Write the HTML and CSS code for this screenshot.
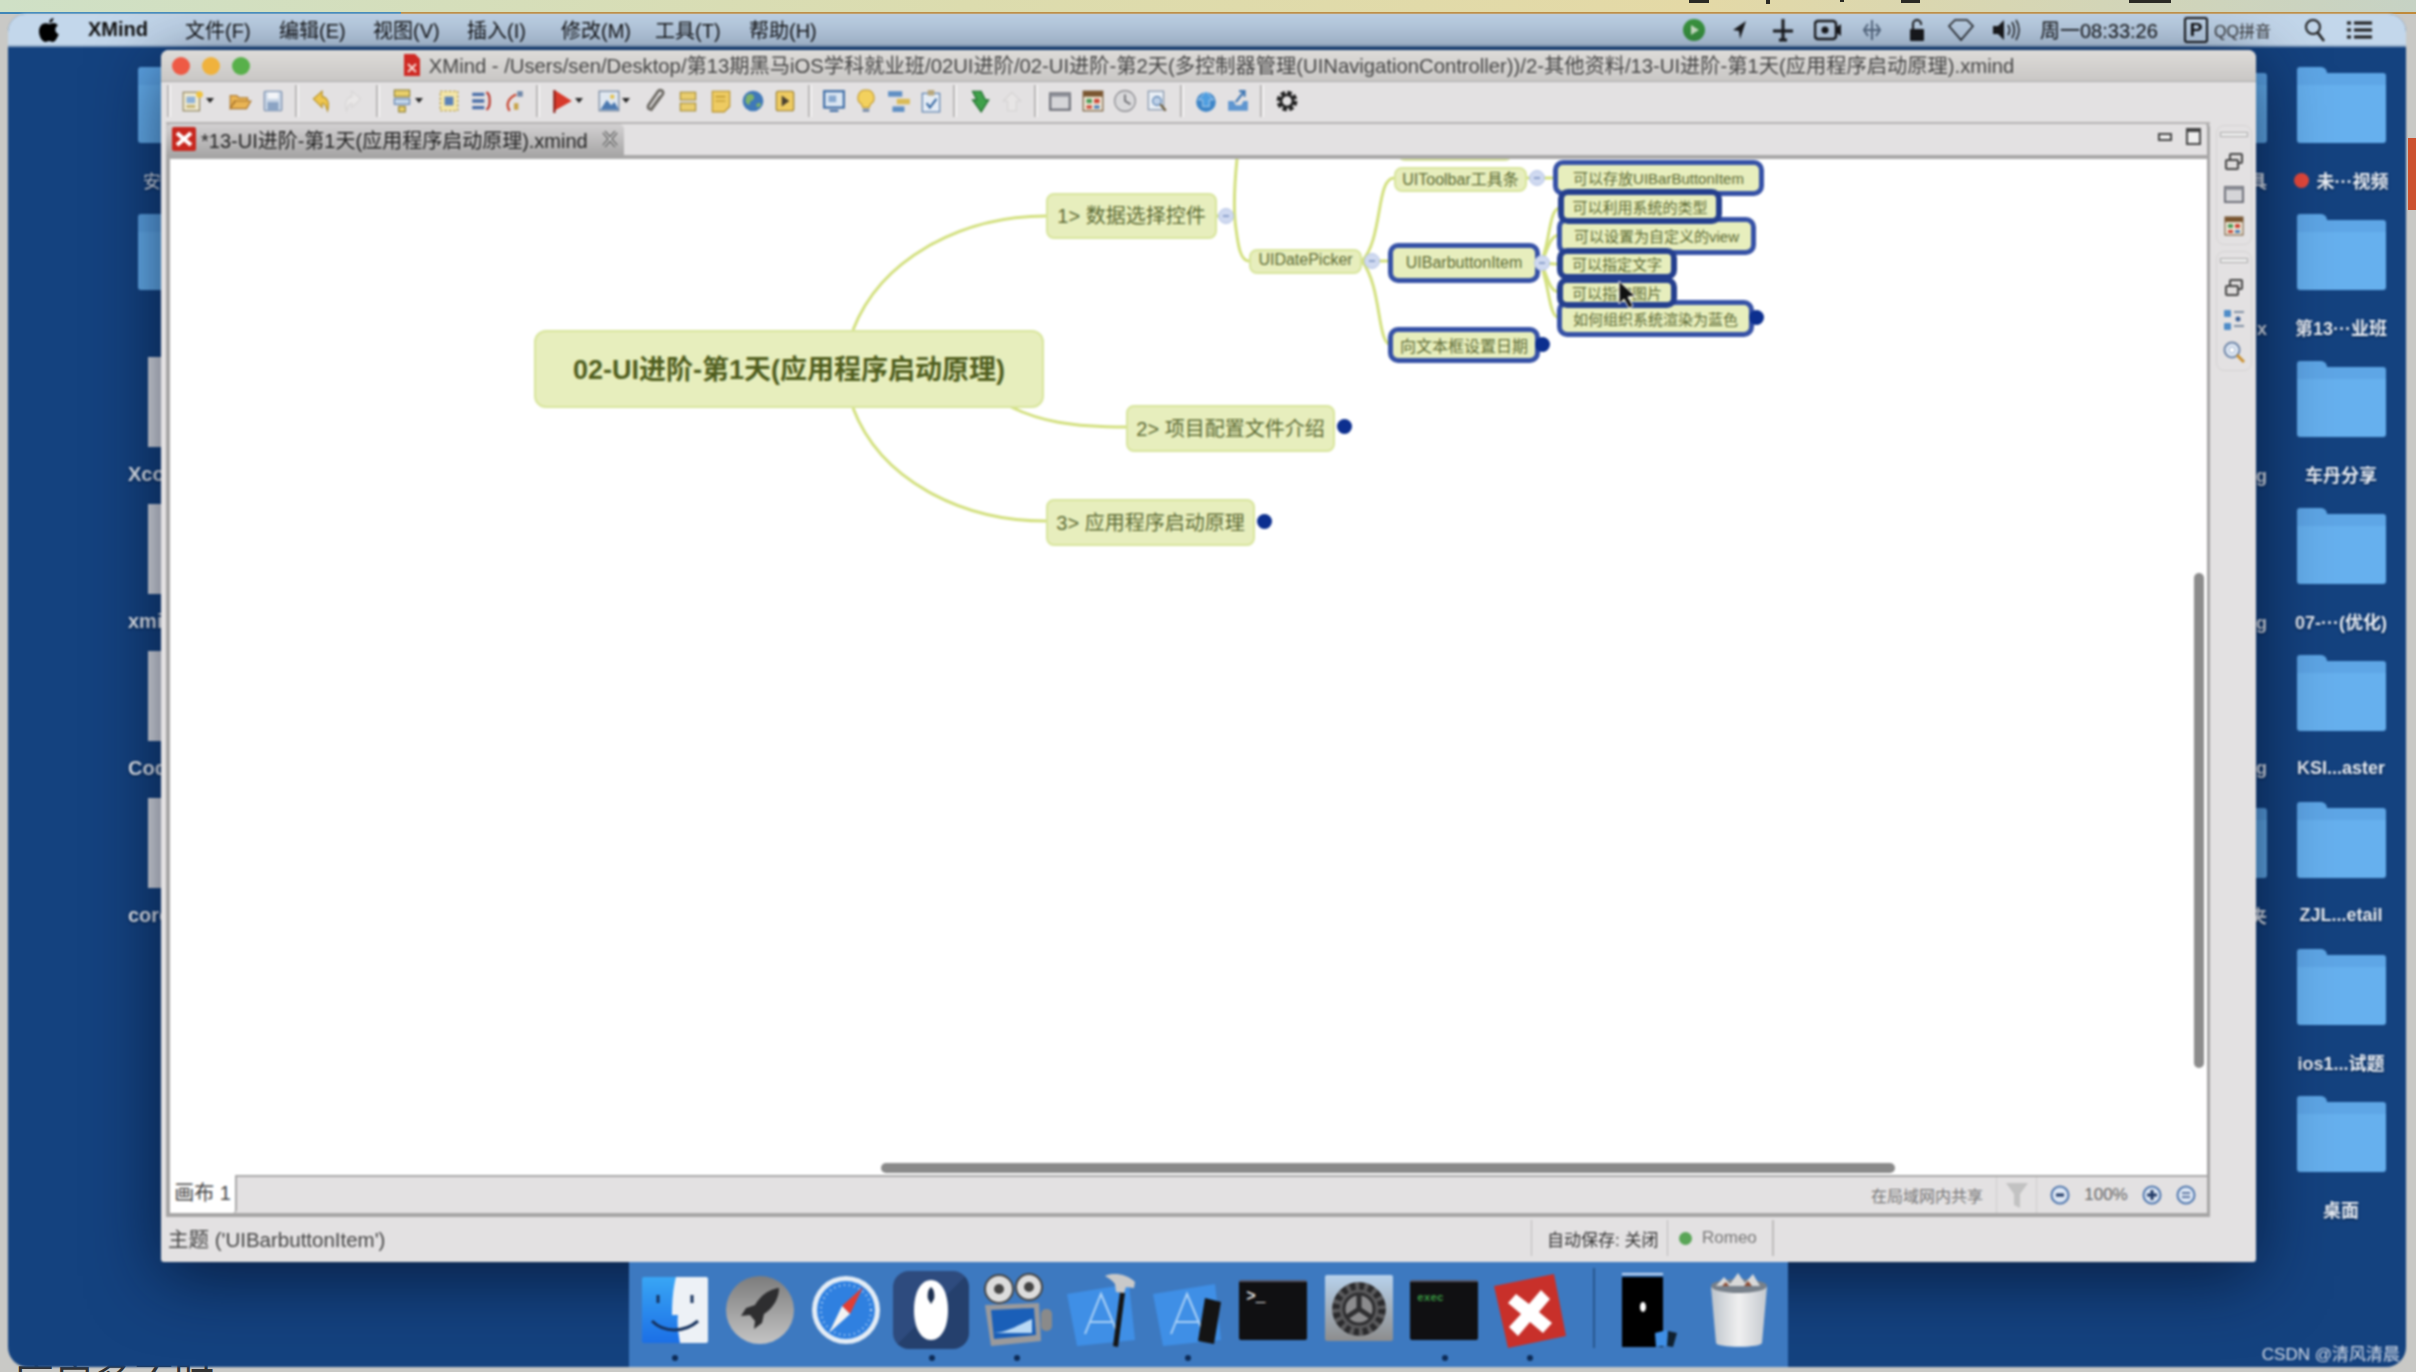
FILE: index.html
```html
<!DOCTYPE html>
<html lang="zh-CN">

<head>
    <meta charset="UTF-8">
    <title>XMind</title>
    <link rel="stylesheet" href="styles.css">
</head>

<body>
    <!-- icon set for toolbars -->
    <svg class="defs" width="0" height="0">
        <defs>
            <linearGradient id="g-finder" x1="0" y1="0" x2="0" y2="1"><stop offset="0" stop-color="#39a6f5"/><stop offset="1" stop-color="#1b6fe6"/></linearGradient>
            <linearGradient id="g-round" x1="0" y1="0" x2="0" y2="1"><stop offset="0" stop-color="#7c7c7c"/><stop offset="1" stop-color="#c4c4c4"/></linearGradient>
            <linearGradient id="g-pref" x1="0" y1="0" x2="0" y2="1"><stop offset="0" stop-color="#b8d2ec"/><stop offset="1" stop-color="#8d8d8d"/></linearGradient>
            <linearGradient id="g-trash" x1="0" y1="0" x2="1" y2="0"><stop offset="0" stop-color="#bcc3ca"/><stop offset=".5" stop-color="#f0f0f0"/><stop offset="1" stop-color="#c3c8ce"/></linearGradient>
        </defs>
        <symbol id="i-new" viewBox="0 0 22 22"><rect x="2" y="3" width="15" height="17" fill="#efe9cf" stroke="#8a7d55"/><rect x="5" y="7" width="8" height="6" fill="#8fb2d8"/><rect x="5" y="15" width="8" height="2" fill="#b9a55c"/><circle cx="17" cy="5" r="3" fill="#f0c33c"/></symbol>
        <symbol id="i-open" viewBox="0 0 22 22"><path d="M2 18V6h6l2 2h8v3H7l-5 7zm0 0l4-7h15l-4 7z" fill="#e9b454" stroke="#a9742a"/></symbol>
        <symbol id="i-save" viewBox="0 0 22 22"><rect x="3" y="2" width="16" height="18" rx="1" fill="#c9d6e6" stroke="#6f86a6"/><rect x="6" y="3" width="10" height="6" fill="#f3f5f8"/><rect x="6" y="12" width="10" height="8" fill="#8ca4c4"/></symbol>
        <symbol id="i-undo" viewBox="0 0 22 22"><path d="M4 9l8-7v5c5 1 7 5 5 13-2-6-3-7-5-7v4z" fill="#eec64e" stroke="#b48e22"/></symbol>
        <symbol id="i-redo" viewBox="0 0 22 22"><path d="M18 9l-8-7v5c-5 1-7 5-5 13 2-6 3-7 5-7v4z" fill="#e9e7e7" stroke="#d6d4d4"/></symbol>
        <symbol id="i-list" viewBox="0 0 22 22"><rect x="4" y="1" width="14" height="6" fill="#e8cf6a" stroke="#8a7a2c"/><rect x="4" y="9" width="14" height="5" fill="#c5d8ec" stroke="#587aa6"/><rect x="8" y="16" width="6" height="5" fill="#e8cf6a" stroke="#8a7a2c"/></symbol>
        <symbol id="i-sel" viewBox="0 0 22 22"><rect x="3" y="2" width="16" height="18" fill="#f4e6a8" stroke="#a58a2c" stroke-dasharray="2 2"/><rect x="7" y="7" width="8" height="8" fill="#5b82b8"/></symbol>
        <symbol id="i-lines" viewBox="0 0 22 22"><path d="M3 5h11M3 11h11M3 17h11" stroke="#4a6ea8" stroke-width="3"/><path d="M16 3c4 2 4 14 0 16" stroke="#b8342a" stroke-width="2" fill="none"/></symbol>
        <symbol id="i-rel" viewBox="0 0 22 22"><path d="M7 20C3 14 6 8 13 5" stroke="#c8432e" stroke-width="2" fill="none"/><rect x="14" y="2" width="5" height="5" fill="#6e87a8"/><rect x="11" y="13" width="4" height="6" fill="#c8a34a"/></symbol>
        <symbol id="i-flag" viewBox="0 0 22 22"><path d="M4 1l16 10L4 20z" fill="#d8392b"/><path d="M4 1v21" stroke="#8c201a" stroke-width="2"/></symbol>
        <symbol id="i-pic" viewBox="0 0 22 22"><rect x="2" y="2" width="18" height="18" fill="#dfe7f0" stroke="#6a7d98"/><circle cx="14" cy="7" r="2" fill="#e4c24e"/><path d="M3 19l6-9 4 5 3-3 4 7z" fill="#4c79b0"/></symbol>
        <symbol id="i-clip" viewBox="0 0 22 22"><path d="M6 20L17 5c2-3-2-5-4-3L4 15c-1 3 1 4 3 3l8-11" fill="none" stroke="#6d6a64" stroke-width="2.500"/></symbol>
        <symbol id="i-boxes" viewBox="0 0 22 22"><rect x="4" y="3" width="14" height="7" fill="#e9cd6e" stroke="#a58a2c"/><rect x="4" y="13" width="14" height="7" fill="#e9cd6e" stroke="#a58a2c"/></symbol>
        <symbol id="i-note" viewBox="0 0 22 22"><path d="M3 2h16v14l-5 5H3z" fill="#eecb62" stroke="#b58f27"/><path d="M6 7h9M6 11h9" stroke="#b58f27"/></symbol>
        <symbol id="i-globe" viewBox="0 0 22 22"><circle cx="11" cy="11" r="9.500" fill="#3f78b8"/><path d="M5 6c4-3 7-1 7 2s-4 2-4 5-3 1-4-2zM14 14c3-2 5-1 4 1s-4 3-4-1z" fill="#7fb26a"/></symbol>
        <symbol id="i-play" viewBox="0 0 22 22"><rect x="3" y="2" width="16" height="18" rx="2" fill="#eecb62" stroke="#9a7c25"/><path d="M8 6l7 5-7 5z" fill="#4b4230"/></symbol>
        <symbol id="i-screen" viewBox="0 0 22 22"><rect x="2" y="2" width="18" height="15" fill="#dbe6f2" stroke="#3f6da6" stroke-width="2"/><rect x="6" y="6" width="7" height="6" fill="#89a9cf"/><path d="M7 20h8" stroke="#3f6da6" stroke-width="2"/></symbol>
        <symbol id="i-bulb" viewBox="0 0 22 22"><path d="M11 1a7 7 0 0 0-4 13l1 3h6l1-3a7 7 0 0 0-4-13z" fill="#f3d15e" stroke="#c39a2c"/><rect x="8" y="18" width="6" height="3" fill="#7c8ea8"/></symbol>
        <symbol id="i-tree" viewBox="0 0 22 22"><rect x="1" y="2" width="13" height="5" fill="#5f8fc4"/><rect x="9" y="9" width="12" height="5" fill="#d9bb58"/><rect x="5" y="16" width="11" height="5" fill="#5f8fc4"/></symbol>
        <symbol id="i-check" viewBox="0 0 22 22"><rect x="3" y="4" width="16" height="17" fill="#e4ecf5" stroke="#4f77a8"/><rect x="8" y="1" width="6" height="5" fill="#b7a77c"/><path d="M7 13l3 4 6-8" stroke="#3a6aa3" stroke-width="2" fill="none"/></symbol>
        <symbol id="i-dl" viewBox="0 0 22 22"><path d="M5 2h8l4 8h3l-7 11-8-11h4z" fill="#3fa04a" stroke="#1e6a2c"/></symbol>
        <symbol id="i-up" viewBox="0 0 22 22"><path d="M11 3l8 8h-4v9H7v-9H3z" fill="#e7e5e5" stroke="#d4d2d2"/></symbol>
        <symbol id="i-win" viewBox="0 0 22 22"><rect x="2" y="4" width="18" height="15" fill="#d5d5d8" stroke="#6d6f78" stroke-width="2"/><rect x="2" y="4" width="18" height="3" fill="#8c8e96"/></symbol>
        <symbol id="i-cal" viewBox="0 0 22 22"><rect x="2" y="2" width="18" height="18" fill="#efe8d8" stroke="#6d4f2c"/><rect x="2" y="2" width="18" height="5" fill="#7a5630"/><rect x="5" y="9" width="5" height="4" fill="#4f9c58"/><rect x="12" y="9" width="5" height="4" fill="#cc4a3a"/><rect x="5" y="15" width="5" height="3" fill="#cc4a3a"/><rect x="12" y="15" width="5" height="3" fill="#4f7fb5"/></symbol>
        <symbol id="i-clock" viewBox="0 0 22 22"><circle cx="11" cy="11" r="9.500" fill="#d8d8da" stroke="#85858a"/><path d="M11 5v6l5 3" stroke="#65656a" stroke-width="1.500" fill="none"/></symbol>
        <symbol id="i-find" viewBox="0 0 22 22"><rect x="3" y="2" width="14" height="17" fill="#e8eef5" stroke="#7b8da5"/><circle cx="11" cy="11" r="4" fill="#bcd0e8" stroke="#4f77a8"/><path d="M14 14l5 6" stroke="#6a5a3a" stroke-width="2"/></symbol>
        <symbol id="i-cloud" viewBox="0 0 22 22"><circle cx="11" cy="12" r="9" fill="#3f86c8"/><path d="M11 2l7 8h-4v6H8v-6H4z" fill="#4f9ee0" stroke="#fff" stroke-width=".5"/></symbol>
        <symbol id="i-share" viewBox="0 0 22 22"><path d="M2 11h5l2 4h5l2-4h4v9H2z" fill="#5f96d0"/><path d="M9 12l7-9M12 2h5v5" stroke="#4178b4" stroke-width="2" fill="none"/></symbol>
        <symbol id="i-gear" viewBox="0 0 22 22"><circle cx="11" cy="11" r="7.500" fill="none" stroke="#222" stroke-width="4" stroke-dasharray="3.900 2"/><circle cx="11" cy="11" r="5.500" fill="none" stroke="#222" stroke-width="2.500"/></symbol>
        <symbol id="i-stack" viewBox="0 0 22 22"><rect x="7" y="3" width="12" height="9" rx="1" fill="#dedcdc" stroke="#444" stroke-width="2"/><rect x="3" y="9" width="12" height="9" rx="1" fill="#dedcdc" stroke="#444" stroke-width="2"/></symbol>
        <symbol id="i-outline" viewBox="0 0 22 22"><rect x="1" y="1" width="7" height="7" rx="1" fill="#4f8cc8"/><rect x="1" y="14" width="7" height="7" rx="1" fill="#4f8cc8"/><path d="M11 3h10M11 17h10" stroke="#7f8fa3" stroke-width="2"/><circle cx="15" cy="10" r="2.500" fill="#3a5f96"/></symbol>
        <symbol id="i-zoom" viewBox="0 0 22 22"><circle cx="9" cy="9" r="7.500" fill="#dfe8f4" stroke="#6f86a8" stroke-width="2"/><circle cx="9" cy="9" r="3" fill="#fff" stroke="#9fb3cf"/><path d="M14 14l7 7" stroke="#c98f2e" stroke-width="3"/></symbol>
    </svg>

    <div class="strip"></div>
    <div class="edge-mark"></div>

    <div class="screen">
        <div class="menubar">
            <svg class="apple" viewBox="0 0 22 26"><path d="M15.500 1c.2 2.400-2 4.800-4.300 4.600C11 3.300 13.300 1.200 15.500 1zM11.200 7c1.200 0 2.400-1 4.300-1 1.500 0 3.200.8 4.300 2.400-3.700 2.200-3 7.300.9 8.800-1.200 3.200-3.500 7.800-6 7.800-1.300 0-2-.9-3.600-.9s-2.400.9-3.600.9C4.300 25 1 19.600 1 14.500 1 9.600 4 6.300 7.200 6.300c1.700 0 3 .7 4 .7z"/></svg>
            <span class="app-name">XMind</span>
            <span class="menu-item">文件(F)</span>
            <span class="menu-item">编辑(E)</span>
            <span class="menu-item">视图(V)</span>
            <span class="menu-item">插入(I)</span>
            <span class="menu-item">修改(M)</span>
            <span class="menu-item">工具(T)</span>
            <span class="menu-item">帮助(H)</span>

            <div class="tray">
                <span class="tray-icon"><svg width="22" height="24" viewBox="0 0 22 24"><circle cx="11" cy="12" r="11" fill="#3c9a3f"/><path d="M8 7l8 5-8 5z" fill="#d9f0d0"/></svg></span>
                <span class="tray-icon"><svg width="18" height="22" viewBox="0 0 18 22"><path d="M16 2L3 11l6 1 1 8z" fill="#1a1a1a"/></svg></span>
                <span class="tray-icon"><svg width="22" height="24" viewBox="0 0 22 24"><path d="M11 1v22M1 13h20M7 22h8" stroke="#1a1a1a" stroke-width="3"/></svg></span>
                <span class="tray-icon"><svg width="28" height="22" viewBox="0 0 28 22"><rect x="1" y="2" width="21" height="18" rx="3" fill="none" stroke="#1a1a1a" stroke-width="2.500"/><circle cx="11" cy="11" r="3.500" fill="#1a1a1a"/><path d="M23 8l4-3v12l-4-3z" fill="#1a1a1a"/></svg></span>
                <span class="tray-icon"><svg width="20" height="24" viewBox="0 0 20 24"><path d="M10 2v20M2 12h16M6 6l-4 6 4 6M14 6l4 6-4 6" stroke="#5a6d84" stroke-width="2" fill="none"/></svg></span>
                <span class="tray-icon"><svg width="18" height="24" viewBox="0 0 18 24"><rect x="2" y="11" width="14" height="12" rx="1" fill="#1a1a1a"/><path d="M5 11V6a4 4 0 0 1 8 0v1" stroke="#1a1a1a" stroke-width="2" fill="none"/></svg></span>
                <span class="tray-icon"><svg width="28" height="24" viewBox="0 0 28 24"><path d="M2 8l6-6h12l6 6-12 14z" fill="none" stroke="#1a1a1a" stroke-width="1.500"/></svg></span>
                <span class="tray-icon"><svg width="30" height="24" viewBox="0 0 30 24"><path d="M2 8h5l6-6v20l-6-6H2z" fill="#1a1a1a"/><path d="M17 7c2 3 2 7 0 10M21 4c3 5 3 11 0 16M25 2c4 6 4 14 0 20" stroke="#1a1a1a" stroke-width="1.500" fill="none"/></svg></span>
                <span class="clock">周一08:33:26</span>
                <span class="ime-box">P</span>
                <span class="ime-name">QQ拼音</span>
                <svg class="tray-search" width="22" height="24" viewBox="0 0 22 24"><circle cx="9" cy="9" r="7" fill="none" stroke="#1a1a1a" stroke-width="2"/><path d="M14 15l6 8" stroke="#1a1a1a" stroke-width="2.500"/></svg>
                <svg width="26" height="20" viewBox="0 0 26 20"><path d="M8 3h18M8 10h18M8 17h18" stroke="#1a1a1a" stroke-width="3"/><path d="M1 3h4M1 10h4M1 17h4" stroke="#1a1a1a" stroke-width="3"/></svg>
            </div>
        </div>

        <div class="desktop">
            <div class="desk-col left-col">
                <div class="desk-item"><div class="folder"></div><div class="desk-label indent">安装包</div></div>
                <div class="desk-item"><div class="folder"></div><div class="desk-label"></div></div>
                <div class="desk-item"><div class="doc"></div><div class="desk-label">Xcode</div></div>
                <div class="desk-item"><div class="doc"></div><div class="desk-label">xmind</div></div>
                <div class="desk-item"><div class="doc"></div><div class="desk-label">Code</div></div>
                <div class="desk-item"><div class="doc"></div><div class="desk-label">core</div></div>
            </div>

            <div class="desk-col mid-col">
                <div class="desk-item"><div class="folder"></div><div class="desk-label">开发小工具</div></div>
                <div class="desk-item"><div class="blank"></div><div class="desk-label">工作.xlsx</div></div>
                <div class="desk-item"><div class="blank"></div><div class="desk-label">截图.png</div></div>
                <div class="desk-item"><div class="blank"></div><div class="desk-label">图片.png</div></div>
                <div class="desk-item"><div class="blank"></div><div class="desk-label">logo.png</div></div>
                <div class="desk-item"><div class="folder"></div><div class="desk-label">新建文件夹</div></div>
            </div>

            <div class="desk-col right-col">
                <div class="desk-item"><div class="folder"></div><div class="desk-label"><i class="tag-dot"></i>未···视频</div></div>
                <div class="desk-item"><div class="folder"></div><div class="desk-label">第13···业班</div></div>
                <div class="desk-item"><div class="folder"></div><div class="desk-label">车丹分享</div></div>
                <div class="desk-item"><div class="folder"></div><div class="desk-label">07-···(优化)</div></div>
                <div class="desk-item"><div class="folder"></div><div class="desk-label">KSI...aster</div></div>
                <div class="desk-item"><div class="folder"></div><div class="desk-label">ZJL...etail</div></div>
                <div class="desk-item"><div class="folder"></div><div class="desk-label">ios1...试题</div></div>
                <div class="desk-item"><div class="folder"></div><div class="desk-label">桌面</div></div>
            </div>

            <div class="window">
                <div class="titlebar">
                    <div class="lights"><i class="light red"></i><i class="light yellow"></i><i class="light green"></i></div>
                    <div class="win-title">
                        <svg width="18" height="24" viewBox="0 0 18 24"><path d="M1 1h11l5 5v17H1z" fill="#cf2a24"/><path d="M5 11l8 8M13 11l-8 8" stroke="#f6d6d0" stroke-width="2"/></svg>
                        XMind - /Users/sen/Desktop/第13期黑马iOS学科就业班/02UI进阶/02-UI进阶-第2天(多控制器管理(UINavigationController))/2-其他资料/13-UI进阶-第1天(应用程序启动原理).xmind
                    </div>
                </div>

                <div class="toolbar">
                    <i class="sep"></i>
                    <span class="tool drop"><svg><use href="#i-new"/></svg></span>
                    <span class="tool"><svg><use href="#i-open"/></svg></span>
                    <span class="tool"><svg><use href="#i-save"/></svg></span>
                    <i class="sep"></i>
                    <span class="tool"><svg><use href="#i-undo"/></svg></span>
                    <span class="tool"><svg><use href="#i-redo"/></svg></span>
                    <i class="sep"></i>
                    <span class="tool drop"><svg><use href="#i-list"/></svg></span>
                    <span class="tool"><svg><use href="#i-sel"/></svg></span>
                    <span class="tool"><svg><use href="#i-lines"/></svg></span>
                    <span class="tool"><svg><use href="#i-rel"/></svg></span>
                    <i class="sep"></i>
                    <span class="tool drop"><svg><use href="#i-flag"/></svg></span>
                    <span class="tool drop"><svg><use href="#i-pic"/></svg></span>
                    <span class="tool"><svg><use href="#i-clip"/></svg></span>
                    <span class="tool"><svg><use href="#i-boxes"/></svg></span>
                    <span class="tool"><svg><use href="#i-note"/></svg></span>
                    <span class="tool"><svg><use href="#i-globe"/></svg></span>
                    <span class="tool"><svg><use href="#i-play"/></svg></span>
                    <i class="sep"></i>
                    <span class="tool"><svg><use href="#i-screen"/></svg></span>
                    <span class="tool"><svg><use href="#i-bulb"/></svg></span>
                    <span class="tool"><svg><use href="#i-tree"/></svg></span>
                    <span class="tool"><svg><use href="#i-check"/></svg></span>
                    <i class="sep"></i>
                    <span class="tool"><svg><use href="#i-dl"/></svg></span>
                    <span class="tool"><svg><use href="#i-up"/></svg></span>
                    <i class="sep"></i>
                    <span class="tool"><svg><use href="#i-win"/></svg></span>
                    <span class="tool"><svg><use href="#i-cal"/></svg></span>
                    <span class="tool"><svg><use href="#i-clock"/></svg></span>
                    <span class="tool"><svg><use href="#i-find"/></svg></span>
                    <i class="sep"></i>
                    <span class="tool"><svg><use href="#i-cloud"/></svg></span>
                    <span class="tool"><svg><use href="#i-share"/></svg></span>
                    <i class="sep"></i>
                    <span class="tool"><svg><use href="#i-gear"/></svg></span>
                </div>

                <div class="workspace">
                    <div class="editor">
                        <div class="tabstrip">
                            <div class="tab">
                                <svg width="24" height="24" viewBox="0 0 24 24"><rect width="24" height="24" rx="2" fill="#c8281f"/><path d="M5 6l14 12M19 6L5 18" stroke="#fff" stroke-width="4"/></svg>
                                <span>*13-UI进阶-第1天(应用程序启动原理).xmind</span>
                                <svg class="tab-close" width="16" height="18" viewBox="0 0 16 18"><path d="M2 2l12 14M14 2L2 16" stroke="#555" stroke-width="4"/><path d="M2 2l12 14M14 2L2 16" stroke="#ddd" stroke-width="1.500"/></svg>
                            </div>
                            <div class="view-btns">
                                <i class="btn-min"></i>
                                <i class="btn-max"></i>
                            </div>
                        </div>

                        <div class="canvas">
                            <svg class="links" width="2037" height="1018" viewBox="0 0 2037 1018" fill="none" stroke="#d3e07f" stroke-width="3">
                                <path d="M683 171C710 101 790 57 876 57"/>
                                <path d="M683 249C710 320 790 362 876 362"/>
                                <path d="M841 248C870 262 900 268 956 268"/>
                                <path d="M1047 57H1056"/>
                                <path d="M1067 0C1064 30 1064 57 1066 70C1068 85 1070 102 1079 102"/>
                                <path d="M1192 102C1213 80 1206 19 1224 19"/>
                                <path d="M1192 102H1218"/>
                                <path d="M1192 102C1213 130 1206 186 1222 186"/>
                                <path d="M1357 19H1385"/>
                                <path d="M1370 104C1380 90 1378 49 1390 49"/>
                                <path d="M1370 104C1378 95 1378 76 1390 76"/>
                                <path d="M1370 104C1378 104 1380 105 1390 105"/>
                                <path d="M1370 104C1378 115 1378 133 1390 133"/>
                                <path d="M1370 104C1380 125 1378 159 1390 159"/>
                            </svg>

                            <div class="topic" style="left:1227px;top:-20px;width:116px;height:22px"></div>
                            <div class="topic central" style="left:364px;top:171px;width:510px;height:78px">02-UI进阶-第1天(应用程序启动原理)</div>
                            <div class="topic main" style="left:876px;top:34px;width:171px;height:46px">1&gt; 数据选择控件</div>
                            <div class="topic main" style="left:956px;top:246px;width:209px;height:47px">2&gt; 项目配置文件介绍</div>
                            <div class="topic main" style="left:876px;top:340px;width:209px;height:47px">3&gt; 应用程序启动原理</div>
                            <div class="topic sub" style="left:1079px;top:90px;width:113px;height:25px">UIDatePicker</div>
                            <div class="topic sub" style="left:1224px;top:8px;width:133px;height:25px">UIToolbar工具条</div>
                            <div class="topic sub picked" style="left:1218px;top:84px;width:152px;height:40px">UIBarbuttonItem</div>
                            <div class="topic sub picked" style="left:1218px;top:168px;width:152px;height:36px">向文本框设置日期</div>
                            <div class="topic leaf picked" style="left:1383px;top:1px;width:211px;height:36px">可以存放UIBarButtonItem</div>
                            <div class="topic leaf picked" style="left:1387px;top:58px;width:199px;height:38px">可以设置为自定义的view</div>
                            <div class="topic leaf picked" style="left:1387px;top:141px;width:197px;height:37px">如何组织系统渲染为蓝色</div>
                            <div class="topic leaf picked deep" style="left:1388px;top:30px;width:164px;height:35px">可以利用系统的类型</div>
                            <div class="topic leaf picked deep" style="left:1387px;top:89px;width:120px;height:32px">可以指定文字</div>
                            <div class="topic leaf picked deep" style="left:1387px;top:118px;width:120px;height:31px">可以指定图片</div>

                            <i class="fold" style="left:1048px;top:49px"></i>
                            <i class="fold" style="left:1194px;top:94px"></i>
                            <i class="fold" style="left:1359px;top:11px"></i>
                            <i class="fold" style="left:1364px;top:96px"></i>
                            <i class="dot" style="left:1167px;top:260px"></i>
                            <i class="dot" style="left:1087px;top:355px"></i>
                            <i class="dot" style="left:1365px;top:178px"></i>
                            <i class="dot" style="left:1579px;top:151px"></i>

                            <svg class="cursor" width="22" height="28" viewBox="0 0 22 28"><path d="M2 1l16 15-7 1 5 9-4 2-5-9-5 5z" fill="#111" stroke="#fff" stroke-width="1"/></svg>

                            <div class="vscroll"></div>
                            <div class="hscroll"></div>
                        </div>

                        <div class="sheetbar">
                            <div class="sheet-tab">画布 1</div>
                            <div class="sheet-tools">
                                <span class="lan">在局域网内共享</span>
                                <span class="funnel"><svg width="24" height="28" viewBox="0 0 24 28"><path d="M1 2h22l-8 11v14l-6-3V13z" fill="#c2c2c2"/></svg></span>
                                <span class="zoom-ctl minus"><svg width="20" height="22" viewBox="0 0 20 22"><circle cx="10" cy="11" r="8.500" fill="#dce6f4" stroke="#4f76ad" stroke-width="2"/><path d="M6 11h8" stroke="#223a66" stroke-width="3"/></svg></span>
                                <span class="zoom-pct">100%</span>
                                <span class="zoom-ctl"><svg width="20" height="22" viewBox="0 0 20 22"><circle cx="10" cy="11" r="8.500" fill="#dce6f4" stroke="#4f76ad" stroke-width="2"/><path d="M5 11h10M10 6v10" stroke="#223a66" stroke-width="3"/></svg></span>
                                <span class="zoom-ctl"><svg width="20" height="22" viewBox="0 0 20 22"><circle cx="10" cy="11" r="8.500" fill="#dce6f4" stroke="#4f76ad" stroke-width="2"/><path d="M6 9h8M6 13h8" stroke="#3a5585" stroke-width="1.500"/></svg></span>
                            </div>
                        </div>
                    </div>

                    <div class="side">
                        <div class="side-group">
                            <i class="grip"></i>
                            <svg><use href="#i-stack"/></svg>
                            <svg><use href="#i-win"/></svg>
                            <svg><use href="#i-cal"/></svg>
                        </div>
                        <div class="side-group">
                            <i class="grip"></i>
                            <svg><use href="#i-stack"/></svg>
                            <svg><use href="#i-outline"/></svg>
                            <svg><use href="#i-zoom"/></svg>
                        </div>
                    </div>
                </div>

                <div class="statusbar">
                    <span class="status-topic">主题 ('UIBarbuttonItem')</span>
                    <span class="status-cell save">自动保存: 关闭</span>
                    <span class="status-cell user"><i class="online"></i>Romeo</span>
                </div>
            </div>

            <div class="dock">
                <div class="dock-item on">
                    <svg width="66" height="70" viewBox="0 0 66 70"><rect y="2" width="66" height="66" rx="2" fill="url(#g-finder)"/><path d="M34 2h30a2 2 0 0 1 2 2v62a2 2 0 0 1-2 2H38c-2-12-3-20-2-28h-6C30 26 31 14 34 2z" fill="#edf1f6"/><path d="M16 20v8M50 20v8" stroke="#16325e" stroke-width="3"/><path d="M10 46c12 12 32 12 46 0" fill="none" stroke="#16325e" stroke-width="3"/></svg>
                </div>
                <div class="dock-item">
                    <svg width="70" height="72" viewBox="0 0 70 72"><circle cx="35" cy="36" r="34" fill="url(#g-round)"/><path d="M54 14c-10 1-19 8-24 17l-9 3-5 8 9-1 5 6-1 8 8-6 2-9c9-6 15-15 15-26z" fill="#2e2e30"/></svg>
                </div>
                <div class="dock-item">
                    <svg width="70" height="72" viewBox="0 0 70 72"><circle cx="35" cy="36" r="34" fill="#e4edf6"/><circle cx="35" cy="36" r="29" fill="#2f80e0"/><circle cx="35" cy="36" r="25" fill="none" stroke="#cfe2f8" stroke-width="2" stroke-dasharray="1 4"/><path d="M52 13L31 32l8 8z" fill="#e23d33"/><path d="M18 59l13-27 8 8z" fill="#f2f2f2"/></svg>
                </div>
                <div class="dock-item on">
                    <div class="mouse-tile">
                        <svg width="36" height="62" viewBox="0 0 36 62"><path d="M18 1c10 0 17 12 17 30S28 61 18 61 1 49 1 31 8 1 18 1z" fill="#fff"/><path d="M18 8c-3 2-4 8-3 12l3 5 3-5c1-4 0-10-3-12z" fill="#1d3050"/></svg>
                    </div>
                </div>
                <div class="dock-item on">
                    <svg width="76" height="74" viewBox="0 0 76 74"><circle cx="20" cy="16" r="14" fill="#ddd" stroke="#444" stroke-width="2"/><circle cx="20" cy="16" r="5" fill="#444"/><circle cx="50" cy="14" r="13" fill="#ddd" stroke="#444" stroke-width="2"/><circle cx="50" cy="14" r="5" fill="#444"/><path d="M6 32l54-2 2 38-50 5z" fill="#9a9a9c"/><path d="M12 37l43-2 2 27-42 4z" fill="#1a5fb8"/><path d="M15 60c14-1 24-8 38-14v14z" fill="#b9d9f5"/><rect x="62" y="36" width="11" height="22" rx="5" fill="#8a8a8a"/></svg>
                </div>
                <div class="dock-item">
                    <svg width="78" height="76" viewBox="0 0 78 76"><path d="M4 22l62-10 6 56-58 6z" fill="#3f8fe6"/><path d="M22 62L38 22l16 38M26 50h24" fill="none" stroke="#a9d0f6" stroke-width="2"/><path d="M50 74l7-54 5 1-7 54z" fill="#151515"/><path d="M42 4c8-4 22-2 30 6l-1 6-8-1-2 6-8-1-1-8c-2-3-5-5-10-8z" fill="#c9c9c9"/></svg>
                </div>
                <div class="dock-item on">
                    <svg width="78" height="76" viewBox="0 0 78 76"><path d="M4 22l62-10 6 56-58 6z" fill="#3f8fe6"/><path d="M22 62L38 22l16 38M26 50h24" fill="none" stroke="#a9d0f6" stroke-width="2"/><path d="M56 26l16 4-7 42-16-3z" fill="#141414"/></svg>
                </div>
                <div class="dock-item">
                    <div class="term"><span>&gt;_</span></div>
                </div>
                <div class="dock-item">
                    <svg width="68" height="70" viewBox="0 0 68 70"><rect width="68" height="66" rx="2" fill="url(#g-pref)"/><circle cx="34" cy="34" r="27" fill="#5a5a5c"/><circle cx="34" cy="34" r="23" fill="none" stroke="#2a2a2c" stroke-width="7" stroke-dasharray="5 4"/><circle cx="34" cy="34" r="15" fill="#8c8c8e" stroke="#2f2f31" stroke-width="3"/><path d="M34 34V20M34 34L22 42M34 34l12 8" stroke="#2f2f31" stroke-width="5"/></svg>
                </div>
                <div class="dock-item on">
                    <div class="term"><span class="exec">exec</span></div>
                </div>
                <div class="dock-item on">
                    <svg width="76" height="76" viewBox="0 0 76 76"><path d="M2 14L62 2l12 62-58 12z" fill="#c8302a"/><path d="M24 22l13 10 12-14 9 9-11 13 13 11-9 10-13-11-12 14-9-9 12-13-13-11z" fill="#fff"/></svg>
                </div>
                <i class="dock-sep"></i>
                <div class="dock-item">
                    <svg width="62" height="78" viewBox="0 0 62 78"><rect x="0" y="2" width="41" height="2" fill="#c7d8f0"/><rect y="6" width="41" height="70" fill="#000"/><ellipse cx="21" cy="36" rx="3" ry="5" fill="#fff"/><path d="M33 62l12-3 3 15-14 2z" fill="#3f8fe6"/><path d="M46 60l9 2-4 14-6-1z" fill="#10202f"/></svg>
                </div>
                <div class="dock-item">
                    <svg width="62" height="78" viewBox="0 0 62 78"><path d="M3 16h56l-5 56c-1 5-45 5-46 0z" fill="url(#g-trash)"/><ellipse cx="31" cy="15" rx="28" ry="7" fill="#77808a"/><path d="M8 15l8-9 6 7 8-11 7 10 8-9 7 12z" fill="#d9d9d9"/><path d="M14 15l4-4 3 4zM36 15l4-5 4 5z" fill="#8c4b32"/></svg>
                </div>
            </div>

            <div class="watermark">CSDN @清风清晨</div>
        </div>
    </div>

    <div class="page-under">应启多不时</div>
</body>

</html>
```

FILE: styles.css
```css
* {
    box-sizing: border-box;
}

html,
body {
    margin: 0;
    height: 1372px;
    overflow: hidden;
}

body {
    position: relative;
    background: #c9c9c6;
    font-family: "Liberation Sans", "Noto Sans CJK SC", sans-serif;
    color: #333;
}

i {
    display: block;
}

.defs {
    position: absolute;
}

.strip {
    height: 14px;
    background-color: #dcdcae;
    background-image:
        linear-gradient(#2a2a24, #2a2a24),
        linear-gradient(#2a2a24, #2a2a24),
        linear-gradient(#2a2a24, #2a2a24),
        linear-gradient(#2a2a24, #2a2a24),
        linear-gradient(#2a2a24, #2a2a24),
        linear-gradient(90deg, #cfe0c6, #dcdcae 40%, #e4d9a6 70%, #c6d2c4);
    background-size: 20px 3px, 4px 4px, 4px 2px, 19px 3px, 42px 3px, 100% 100%;
    background-position: 1689px 0, 1766px 0, 1840px 0, 1901px 0, 2129px 0, 0 0;
    background-repeat: no-repeat;
    border-bottom: 2px solid;
    border-image: linear-gradient(90deg, #3f86b8 402px, #c08a3a 402px) 1;
}

.edge-mark {
    position: absolute;
    left: 2408px;
    top: 138px;
    width: 8px;
    height: 72px;
    background: #cc5230;
}

/* screen */

.screen {
    width: 2398px;
    height: 1353px;
    margin-left: 8px;
    background: #14427f;
    border-radius: 18px 18px 20px 20px;
    overflow: hidden;
    display: flex;
    flex-direction: column;
    filter: blur(0.8px);
}

.page-under {
    margin-top: -22px;
    height: 27px;
    overflow: hidden;
    padding-left: 14px;
    font-size: 40px;
    line-height: 72px;
    color: #333;
}

.menubar {
    height: 33px;
    background: #c3d7eb;
    border-bottom: 2px solid #8fa9c6;
    display: flex;
    align-items: center;
    padding: 0 34px 0 30px;
    font-size: 20px;
    color: #111;
    flex-shrink: 0;
}

.apple {
    width: 22px;
    height: 26px;
    margin-right: 28px;
}

.app-name {
    font-weight: bold;
    margin-right: 37px;
}

.menu-item {
    width: 94px;
    white-space: nowrap;
}

.tray {
    margin-left: auto;
    display: flex;
    align-items: center;
}

.tray-icon {
    width: 44.500px;
    display: flex;
    justify-content: center;
}

.clock {
    margin-left: 12px;
    width: 130px;
    white-space: nowrap;
}

.ime-box {
    margin-left: 14px;
    width: 24px;
    height: 26px;
    border: 2px solid #111;
    border-radius: 3px;
    font-size: 19px;
    font-weight: bold;
    text-align: center;
    line-height: 22px;
}

.ime-name {
    margin-left: 6px;
    font-size: 16px;
    color: #333;
    width: 62px;
    white-space: nowrap;
}

.tray-search {
    margin: 0 20px 0 28px;
}

.desktop {
    position: relative;
    flex: 1;
}

/* desktop icons */

.desk-col {
    position: absolute;
    top: 26px;
    width: 130px;
    display: flex;
    flex-direction: column;
}

.left-col {
    left: 120px;
}

.mid-col {
    left: 2129px;
}

.right-col {
    right: 0;
}

.desk-item {
    height: 147px;
    display: flex;
    flex-direction: column;
    align-items: center;
}

.left-col .desk-item {
    align-items: flex-start;
}

.mid-col .desk-item {
    align-items: flex-end;
}

.folder {
    width: 89px;
    height: 70px;
    border-radius: 3px;
    background: linear-gradient(#5ea6e6 0 12px, #66b0ee 12px);
    position: relative;
    flex-shrink: 0;
}

.folder::before {
    content: "";
    position: absolute;
    left: 0;
    top: -6px;
    width: 30px;
    height: 8px;
    background: #5ea6e6;
    border-radius: 3px 6px 0 0;
}

.left-col .folder {
    margin-left: 10px;
}

.doc {
    width: 60px;
    height: 90px;
    margin: -10px 0 -10px 20px;
    background: linear-gradient(90deg, #e9e9ec, #b7b9c2);
    flex-shrink: 0;
}

.blank {
    height: 70px;
    flex-shrink: 0;
}

.desk-label {
    margin-top: 25px;
    height: 24px;
    display: flex;
    align-items: center;
    gap: 8px;
    font-size: 18px;
    font-weight: bold;
    color: #e9eef5;
    white-space: nowrap;
    text-shadow: 0 1px 3px #0a2448;
}

.left-col .desk-label {
    font-size: 20px;
}

.desk-label.indent {
    margin-left: 15px;
    font-size: 18px;
    font-weight: normal;
}

.tag-dot {
    width: 15px;
    height: 15px;
    border-radius: 50%;
    background: #e6483a;
}

.watermark {
    position: absolute;
    right: 6px;
    bottom: 2px;
    font-size: 17px;
    color: #d7deea;
}

/* window */

.window {
    position: absolute;
    left: 153px;
    top: 3px;
    width: 2095px;
    height: 1212px;
    background: #e3e1e2;
    border-radius: 8px 8px 3px 3px;
    box-shadow: 0 14px 70px rgba(3, 14, 40, 0.7);
    display: flex;
    flex-direction: column;
}

.titlebar {
    height: 32px;
    border-radius: 8px 8px 0 0;
    background: linear-gradient(#dedcd9, #c9c7c5);
    border-bottom: 1px solid #aaa;
    display: grid;
    grid-template-columns: 1fr auto 1fr;
    align-items: center;
    flex-shrink: 0;
}

.lights {
    display: flex;
    gap: 12px;
    padding-left: 11px;
}

.light {
    width: 18px;
    height: 18px;
    border-radius: 50%;
}

.red {
    background: #ee5a45;
}

.yellow {
    background: #f0b23c;
}

.green {
    background: #58b04a;
}

.win-title {
    display: flex;
    align-items: center;
    gap: 8px;
    padding-bottom: 2px;
    font-size: 20.250px;
    color: #444;
    white-space: nowrap;
}

.toolbar {
    height: 38px;
    display: flex;
    align-items: center;
    flex-shrink: 0;
}

.sep {
    width: 16px;
    height: 32px;
    background: linear-gradient(90deg, #b8b6b6 50%, #f5f4f4 50%) center / 4px 100% no-repeat;
}

.tool {
    width: 32.400px;
    display: flex;
    justify-content: center;
    position: relative;
}

.tool svg {
    width: 24px;
    height: 26px;
}

.tool.drop {
    width: 47px;
    justify-content: flex-start;
    padding-left: 4px;
}

.tool.drop::after {
    content: "";
    position: absolute;
    left: 29px;
    top: 10px;
    border: 4px solid transparent;
    border-top: 5px solid #222;
}

.workspace {
    flex: 1;
    display: flex;
    min-height: 0;
    padding: 2px 4px 0 5px;
}

.editor {
    width: 2044px;
    display: flex;
    flex-direction: column;
    border: 4px solid #a6a5a5;
    border-top: none;
    border-right-width: 3px;
    border-radius: 6px 6px 0 0;
}

.tabstrip {
    height: 37px;
    margin: 0 -3px 0 -4px;
    border-top: 2px solid #b5b3b3;
    border-bottom: 4px solid #a9a8a8;
    display: flex;
    justify-content: space-between;
    flex-shrink: 0;
}

.tab {
    width: 458px;
    height: 33px;
    display: flex;
    align-items: center;
    gap: 5px;
    padding: 0 0 3px 6px;
    background: linear-gradient(#d3d1d2, #a5a4a4);
    border-radius: 5px 5px 0 0;
    font-size: 20px;
    color: #222;
    white-space: nowrap;
}

.tab-close {
    margin-left: 9px;
}

.view-btns {
    display: flex;
    align-items: center;
    gap: 14px;
    padding: 0 9px 6px 0;
}

.btn-min {
    width: 14px;
    height: 8px;
    border: 2px solid #444;
    background: #eee;
}

.btn-max {
    width: 15px;
    height: 17px;
    border: 2px solid #444;
    border-top-width: 4px;
    background: #eee;
}

/* mind map */

.canvas {
    position: relative;
    flex: 1;
    background: #fff;
    overflow: hidden;
    min-height: 0;
}

.links {
    position: absolute;
    left: 0;
    top: 0;
}

.topic {
    position: absolute;
    display: flex;
    align-items: center;
    justify-content: center;
    padding-bottom: 3px;
    background: #e7eebd;
    border: 2px solid #d8e59c;
    border-radius: 8px;
    color: #5c6a33;
    white-space: nowrap;
}

.central {
    font-size: 27px;
    font-weight: bold;
    color: #4f5d1d;
    border-radius: 12px;
}

.main {
    font-size: 20px;
}

.sub {
    font-size: 16px;
}

.leaf {
    font-size: 15px;
}

.picked {
    border: 5px solid #3551a6;
    border-radius: 10px;
    padding-bottom: 1px;
}

.deep {
    border-color: #243f8e;
    border-width: 6px;
}

.fold {
    position: absolute;
    width: 16px;
    height: 16px;
    border-radius: 50%;
    background: #cfd9f0;
    border: 1px solid #b9c7e6;
    z-index: 2;
}

.fold::after {
    content: "";
    position: absolute;
    left: 4px;
    top: 6px;
    width: 6px;
    height: 2px;
    background: #8ea2cc;
}

.dot {
    position: absolute;
    width: 15px;
    height: 15px;
    border-radius: 50%;
    background: #0c2f8f;
}

.cursor {
    position: absolute;
    left: 1447px;
    top: 121px;
}

.vscroll {
    position: absolute;
    right: 3px;
    top: 414px;
    width: 10px;
    height: 495px;
    border-radius: 5px;
    background: #8c8c8c;
}

.hscroll {
    position: absolute;
    left: 711px;
    bottom: 2px;
    width: 1014px;
    height: 10px;
    border-radius: 5px;
    background: #8a8a8a;
}

.sheetbar {
    height: 38px;
    display: flex;
    border-top: 2px solid #a9a8a8;
    flex-shrink: 0;
    background: #e3e1e2;
}

.sheet-tab {
    width: 67px;
    margin-top: -2px;
    background: #fff;
    border-right: 2px solid #a9a8a8;
    border-bottom-right-radius: 4px;
    font-size: 20px;
    line-height: 36px;
    text-align: center;
    color: #444;
}

.sheet-tools {
    margin-left: auto;
    display: flex;
    align-items: center;
    padding-right: 11px;
}

.lan {
    font-size: 16px;
    color: #777;
    margin-right: 13px;
}

.funnel {
    width: 41px;
    height: 36px;
    border-left: 1px solid #cfcdcd;
    border-right: 1px solid #cfcdcd;
    display: flex;
    align-items: center;
    justify-content: center;
}

.zoom-ctl {
    display: flex;
}

.zoom-ctl.minus {
    margin-left: 13px;
}

.zoom-pct {
    width: 72px;
    text-align: center;
    font-size: 17px;
    color: #666;
}

.zoom-ctl + .zoom-ctl {
    margin-left: 14px;
}

.side {
    margin-left: 6px;
    width: 36px;
    display: flex;
    flex-direction: column;
    gap: 6px;
    padding-top: 3px;
}

.side-group {
    height: 120px;
    border: 1px solid #d5d3d3;
    border-radius: 8px;
    display: flex;
    flex-direction: column;
    align-items: center;
    padding-top: 6px;
    gap: 10px;
}

.side-group svg {
    width: 22px;
    height: 22px;
    flex-shrink: 0;
}

.grip {
    width: 28px;
    height: 5px;
    border: 1px solid #aaa;
    background: #eee;
    margin-bottom: 4px;
}

.statusbar {
    height: 45px;
    display: flex;
    align-items: center;
    padding: 0 0 3px 7px;
    flex-shrink: 0;
    font-size: 20.500px;
    color: #444;
}

.status-topic {
    width: 1363px;
    white-space: nowrap;
}

.status-cell {
    height: 36px;
    display: flex;
    align-items: center;
    border-left: 1px solid #bdbbbb;
    font-size: 17px;
    white-space: nowrap;
}

.save {
    width: 136px;
    padding-left: 15px;
    color: #333;
}

.user {
    width: 107px;
    padding-left: 11px;
    gap: 10px;
    color: #777;
    border-right: 2px solid #bdbbbb;
}

.online {
    width: 13px;
    height: 13px;
    border-radius: 50%;
    background: #5aa557;
}

/* dock */

.dock {
    position: absolute;
    left: 621px;
    top: 1215px;
    width: 1159px;
    height: 105px;
    padding: 6px 0 0 3px;
    background: #3d79c0;
    display: flex;
    z-index: 3;
}

.dock-item {
    width: 85.500px;
    height: 84px;
    display: flex;
    align-items: center;
    justify-content: center;
    position: relative;
    flex-shrink: 0;
}

.dock-item.on::after {
    content: "";
    position: absolute;
    left: 40px;
    bottom: -9px;
    width: 6px;
    height: 6px;
    border-radius: 50%;
    background: #0d2a55;
}

.dock-sep {
    width: 38px;
    height: 80px;
    flex-shrink: 0;
    background: linear-gradient(#27568f, #27568f) 20px 0 / 2px 100% no-repeat;
}

.mouse-tile {
    width: 76px;
    height: 78px;
    border-radius: 16px;
    background: linear-gradient(135deg, #2e4b7e 50%, #25406d 50%);
    display: flex;
    align-items: center;
    justify-content: center;
}

.term {
    width: 68px;
    height: 60px;
    background: #101012;
    border-top: 2px solid #556;
    border-radius: 2px;
    padding: 6px 7px;
    font-family: "Liberation Mono", monospace;
    font-size: 16px;
    font-weight: bold;
    color: #e8e8e8;
}

.exec {
    color: #3a9a42;
    font-size: 11px;
}
```
